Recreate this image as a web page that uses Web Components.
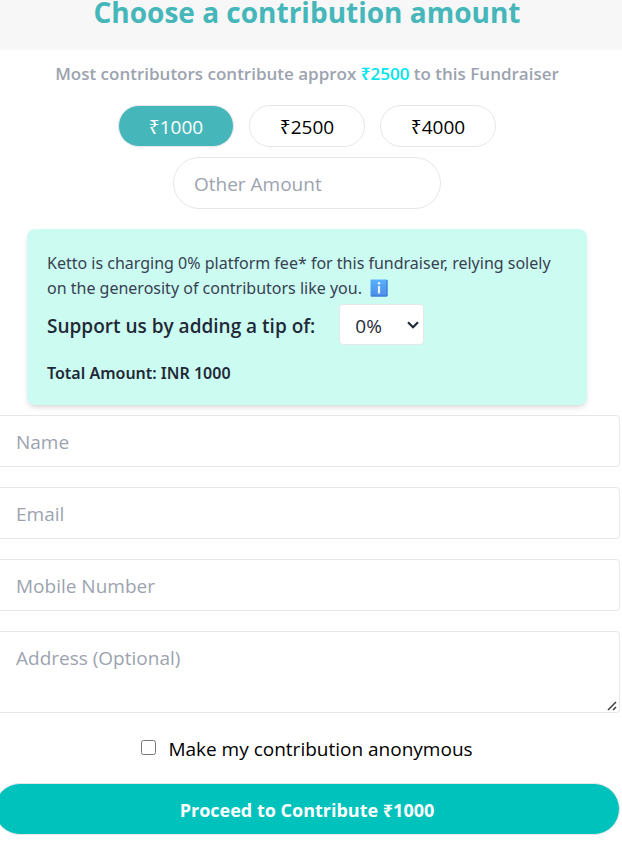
<!DOCTYPE html>
<html lang="en">
<head>
<meta charset="utf-8">
<meta name="viewport" content="width=device-width, initial-scale=1">
<title>Choose a contribution amount</title>
<style>
  html { overflow-x: hidden; }
  body {
    margin: 0;
    background: #fff;
    color: #000;
    font-family: "Open Sans", "Noto Sans", sans-serif;
    font-size: 19px;
    line-height: 28px;
    --teal: #45b6b9;
    --line: #e5e7eb;
    --muted: #9ca3af;
  }
</style>
</head>
<body>
<contribution-page>
  <page-heading slot="heading">Choose a contribution amount</page-heading>
  <contribution-hint slot="hint">Most contributors contribute approx <span>₹2500</span> to this Fundraiser</contribution-hint>
  <amount-picker slot="amounts">
    <amount-option selected>₹1000</amount-option>
    <amount-option>₹2500</amount-option>
    <amount-option>₹4000</amount-option>
  </amount-picker>
  <tip-card slot="tip">Ketto is charging 0% platform fee* for this fundraiser, relying solely on the generosity of contributors like you.</tip-card>
  <text-field label="Name" type="text"></text-field>
  <text-field label="Email" type="email"></text-field>
  <text-field label="Mobile Number" type="tel"></text-field>
  <text-field label="Address (Optional)" multiline></text-field>
  <check-field>Make my contribution anonymous</check-field>
  <submit-button>Proceed to Contribute ₹1000</submit-button>
</contribution-page>

<script>
  function define(name, html, setup) {
    const template = document.createElement('template');
    template.innerHTML = html;
    customElements.define(name, class extends HTMLElement {
      constructor() {
        super();
        this.attachShadow({ mode: 'open' }).append(template.content.cloneNode(true));
        if (setup) setup(this, this.shadowRoot);
      }
    });
  }

  define('contribution-page', `
    <style>
      :host { display: block; }
      header { background: #f7f7f7; padding-right: 8px; }
      main { margin: 0 2px 0 -6px; padding-bottom: 8px; }
      .fields { display: flex; flex-direction: column; gap: 20px; margin-top: 10px; }
    </style>
    <header><slot name="heading"></slot></header>
    <main>
      <slot name="hint"></slot>
      <slot name="amounts"></slot>
      <slot name="tip"></slot>
      <form class="fields"><slot></slot></form>
    </main>`);

  define('page-heading', `
    <style>
      :host { display: block; padding-bottom: 26px; }
      h1 { margin: 0; color: var(--teal); font-size: 28px; line-height: 24px; font-weight: 700; text-align: center; white-space: nowrap; }
    </style>
    <h1><slot></slot></h1>`);

  define('contribution-hint', `
    <style>
      :host { display: block; padding: 12px 0 19px; color: var(--muted); text-align: center; font-size: 17px; line-height: 24px; font-weight: 600; }
      p { margin: 0; }
      ::slotted(span) { color: #00e5ec; }
    </style>
    <p><slot></slot></p>`);

  define('amount-picker', `
    <style>
      :host { display: flex; flex-direction: column; align-items: center; gap: 10px; }
      .options { display: flex; gap: 15px; }
      input {
        box-sizing: border-box; width: 268px; height: 52px; padding: 2px 20px 0;
        border: 1px solid var(--line); border-radius: 26px; background: #fff; font: inherit; color: inherit;
      }
      input::placeholder { color: var(--muted); opacity: 1; }
    </style>
    <div class="options"><slot></slot></div>
    <input type="text" inputmode="numeric" placeholder="Other Amount" aria-label="Other Amount">`);

  define('amount-option', `
    <style>
      :host { display: block; }
      button {
        box-sizing: border-box; min-width: 116px; height: 42px; padding: 2px 20px 0;
        border: 1px solid var(--line); border-radius: 21px; background: #fff; color: #000; font: inherit;
      }
      :host([selected]) button { background: var(--teal); color: #fff; }
    </style>
    <button type="button"><slot></slot></button>`,
    (host, root) => root.querySelector('button').setAttribute('aria-pressed', host.hasAttribute('selected')));

  define('tip-card', `
    <style>
      :host {
        display: block; margin: 20px 33px 0; padding: 22px 20px 20px; border-radius: 8px;
        background: #ccfbf1; color: #1f2937;
        box-shadow: 0 4px 6px -1px rgba(0,0,0,.1), 0 2px 4px -2px rgba(0,0,0,.1);
      }
      p { margin: 0; }
      .note { color: #374151; font-family: "Noto Sans", sans-serif; font-size: 16px; line-height: 25px; }
      .note svg { width: 18px; height: 18px; margin-left: 4px; vertical-align: -3px; }
      .tip { display: flex; align-items: center; gap: 24px; margin-top: 3px; }
      label { font-weight: 600; font-size: 19px; padding-top: 2px; }
      .pick { display: grid; align-items: center; }
      .pick > * { grid-area: 1 / 1; }
      select {
        appearance: none; box-sizing: border-box; width: 85px; height: 41px; padding: 2px 15px 0;
        border: 1px solid var(--line); border-radius: 4px; background: #fff; color: inherit; font: inherit;
      }
      .pick svg { justify-self: end; width: 12px; height: 8px; margin-right: 5px; pointer-events: none; }
      .total { margin-top: 16px; font-family: "Noto Sans", sans-serif; font-size: 16px; line-height: 24px; font-weight: 600; }
    </style>
    <p class="note"><slot></slot>
      <svg viewBox="0 0 18 18" role="img" aria-label="Information">
        <defs><linearGradient id="g" x2="0" y2="1"><stop stop-color="#58b0fb"/><stop offset="1" stop-color="#4c8ce9"/></linearGradient></defs>
        <rect x=".5" y=".5" width="17" height="17" rx="1" fill="url(#g)"/>
        <path d="M1 17h16V1" fill="none" stroke="#3979d7"/>
        <circle cx="9" cy="4.3" r="1.3" fill="#e9efff"/>
        <path d="M9 7v7.5" stroke="#e9efff" stroke-width="2.2"/>
      </svg></p>
    <div class="tip">
      <label for="tip">Support us by adding a tip of:</label>
      <span class="pick">
        <select id="tip"><option>0%</option><option>5%</option><option>10%</option></select>
        <svg viewBox="0 0 12 8"><path d="M1 1.2 6 6.2 11 1.2" fill="none" stroke="#1f2937" stroke-width="2.2"/></svg>
      </span>
    </div>
    <p class="total">Total Amount: INR 1000</p>`);

  define('text-field', `
    <style>
      :host { display: block; }
      input, textarea {
        display: block; box-sizing: border-box; width: 100%; height: 52px; padding: 2px 21px 0;
        border: 1px solid var(--line); border-radius: 4px; background: #fff; color: inherit; font: inherit;
      }
      textarea { height: 82px; padding: 12px 21px; resize: vertical; overflow: auto; }
      textarea::-webkit-resizer {
        background: url("data:image/svg+xml,%3Csvg xmlns='http://www.w3.org/2000/svg' width='15' height='15'%3E%3Cpath d='M4 13 12 5M9 13l3-3' stroke='%23444' stroke-width='1.6'/%3E%3C/svg%3E") right bottom no-repeat;
      }
      ::placeholder { color: var(--muted); opacity: 1; }
    </style>`,
    (host, root) => {
      const label = host.getAttribute('label');
      const field = document.createElement(host.hasAttribute('multiline') ? 'textarea' : 'input');
      if (host.hasAttribute('type')) field.type = host.getAttribute('type');
      field.placeholder = label;
      field.setAttribute('aria-label', label);
      root.append(field);
    });

  define('check-field', `
    <style>
      :host { display: block; margin-top: 2px; }
      .row { display: flex; justify-content: center; align-items: center; gap: 12px; }
      input { width: 15px; height: 15px; margin: 0 0 4px; }
    </style>
    <div class="row"><input type="checkbox" id="check"><label for="check"><slot></slot></label></div>`);

  define('submit-button', `
    <style>
      :host { display: block; }
      button {
        display: block; box-sizing: border-box; width: 100%; height: 52px; padding: 2px 20px 0;
        border: 1px solid var(--line); border-radius: 26px; background: #00c2bd; color: #fff; font: inherit; font-size: 18px; font-weight: 700;
      }
    </style>
    <button type="submit"><slot></slot></button>`);
</script>
</body>
</html>
